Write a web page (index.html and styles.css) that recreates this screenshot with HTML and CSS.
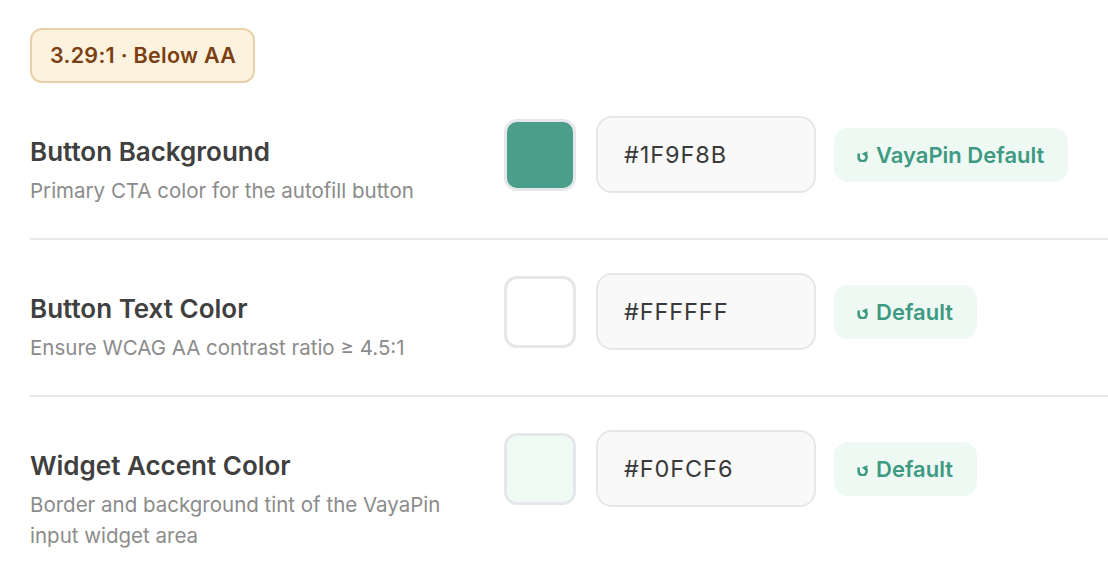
FILE: index.html
```html
<!DOCTYPE html>
<html lang="en">
<head>
<meta charset="utf-8">
<title>Colors</title>
<link rel="stylesheet" href="styles.css">
</head>
<body>
<div class="panel">
  <div class="badge">3.29:1 · Below AA</div>

  <div class="row">
    <div class="label">
      <div class="title">Button Background</div>
      <div class="desc">Primary CTA color for the autofill button</div>
    </div>
    <div class="controls">
      <div class="swatch swatch-teal"></div>
      <div class="hex">#1F9F8B</div>
      <button class="reset"><svg class="icon" viewBox="0 0 10 10" width="11" height="11"><path d="M1.5 2.2 L1.5 5.6 A3.6 3.6 0 1 0 6.4 2.3" fill="none" stroke="currentColor" stroke-width="2.3" stroke-linecap="butt"/><path d="M4.2 2.6 L9.6 0.2 L9.0 5.4 Z" fill="currentColor"/></svg>VayaPin Default</button>
    </div>
  </div>

  <div class="row">
    <div class="label">
      <div class="title">Button Text Color</div>
      <div class="desc">Ensure WCAG AA contrast ratio ≥ 4.5:1</div>
    </div>
    <div class="controls">
      <div class="swatch swatch-white"></div>
      <div class="hex">#FFFFFF</div>
      <button class="reset"><svg class="icon" viewBox="0 0 10 10" width="11" height="11"><path d="M1.5 2.2 L1.5 5.6 A3.6 3.6 0 1 0 6.4 2.3" fill="none" stroke="currentColor" stroke-width="2.3" stroke-linecap="butt"/><path d="M4.2 2.6 L9.6 0.2 L9.0 5.4 Z" fill="currentColor"/></svg>Default</button>
    </div>
  </div>

  <div class="row">
    <div class="label">
      <div class="title">Widget Accent Color</div>
      <div class="desc">Border and background tint of the VayaPin input widget area</div>
    </div>
    <div class="controls">
      <div class="swatch swatch-mint"></div>
      <div class="hex">#F0FCF6</div>
      <button class="reset"><svg class="icon" viewBox="0 0 10 10" width="11" height="11"><path d="M1.5 2.2 L1.5 5.6 A3.6 3.6 0 1 0 6.4 2.3" fill="none" stroke="currentColor" stroke-width="2.3" stroke-linecap="butt"/><path d="M4.2 2.6 L9.6 0.2 L9.0 5.4 Z" fill="currentColor"/></svg>Default</button>
    </div>
  </div>
</div>
</body>
</html>
```

FILE: styles.css
```css
html, body {
  margin: 0;
  padding: 0;
  background: #ffffff;
}

body {
  font-family: Inter, "Noto Sans", "Liberation Sans", sans-serif;
  overflow: hidden;
}

.panel {
  padding: 28px 0 0 30px;
}

.badge {
  display: inline-block;
  box-sizing: border-box;
  height: 55px;
  padding: 0 17px 0 18px;
  line-height: 51px;
  background: #fdf2de;
  border: 2px solid #e8d0a8;
  border-radius: 12px;
  color: #7a3f12;
  font-size: 21.5px;
  font-weight: 600;
  letter-spacing: 0.3px;
}

.row {
  display: flex;
  align-items: flex-start;
  gap: 24px;
  padding: 33px 0 32px;
  border-bottom: 2px solid #e9e9e9;
}

.row:last-child {
  border-bottom: none;
}

.label {
  width: 450px;
  flex: 0 0 450px;
  padding-top: 19px;
}

.title {
  font-size: 26px;
  line-height: 34px;
  font-weight: 600;
  color: #404040;
}

.desc {
  margin-top: 6px;
  font-size: 20.5px;
  line-height: 31px;
  color: #8b8b8b;
}

.controls {
  display: flex;
  align-items: center;
}

.swatch {
  box-sizing: border-box;
  width: 72px;
  height: 72px;
  border: 3px solid #e6e7ea;
  border-radius: 13px;
  margin-right: 20px;
}

.swatch-teal { background: #4b9e8a; }
.swatch-white { background: #ffffff; }
.swatch-mint { background: #f0faf5; }

.hex {
  box-sizing: border-box;
  width: 220px;
  height: 77px;
  padding-left: 26px;
  border: 2px solid #e6e7ea;
  border-radius: 16px;
  background: #f9f9f9;
  display: flex;
  align-items: center;
  font-size: 23.5px;
  letter-spacing: 0.9px;
  color: #3a3a3a;
  margin-right: 18px;
}

.reset {
  box-sizing: border-box;
  height: 54px;
  padding: 0 24px 0 23px;
  border: none;
  border-radius: 14px;
  background: #eff9f4;
  color: #3f9a83;
  font-family: inherit;
  font-size: 22px;
  font-weight: 600;
  display: flex;
  align-items: center;
  gap: 8px;
  cursor: pointer;
}

.icon {
  display: block;
  margin-top: 4px;
}
```
